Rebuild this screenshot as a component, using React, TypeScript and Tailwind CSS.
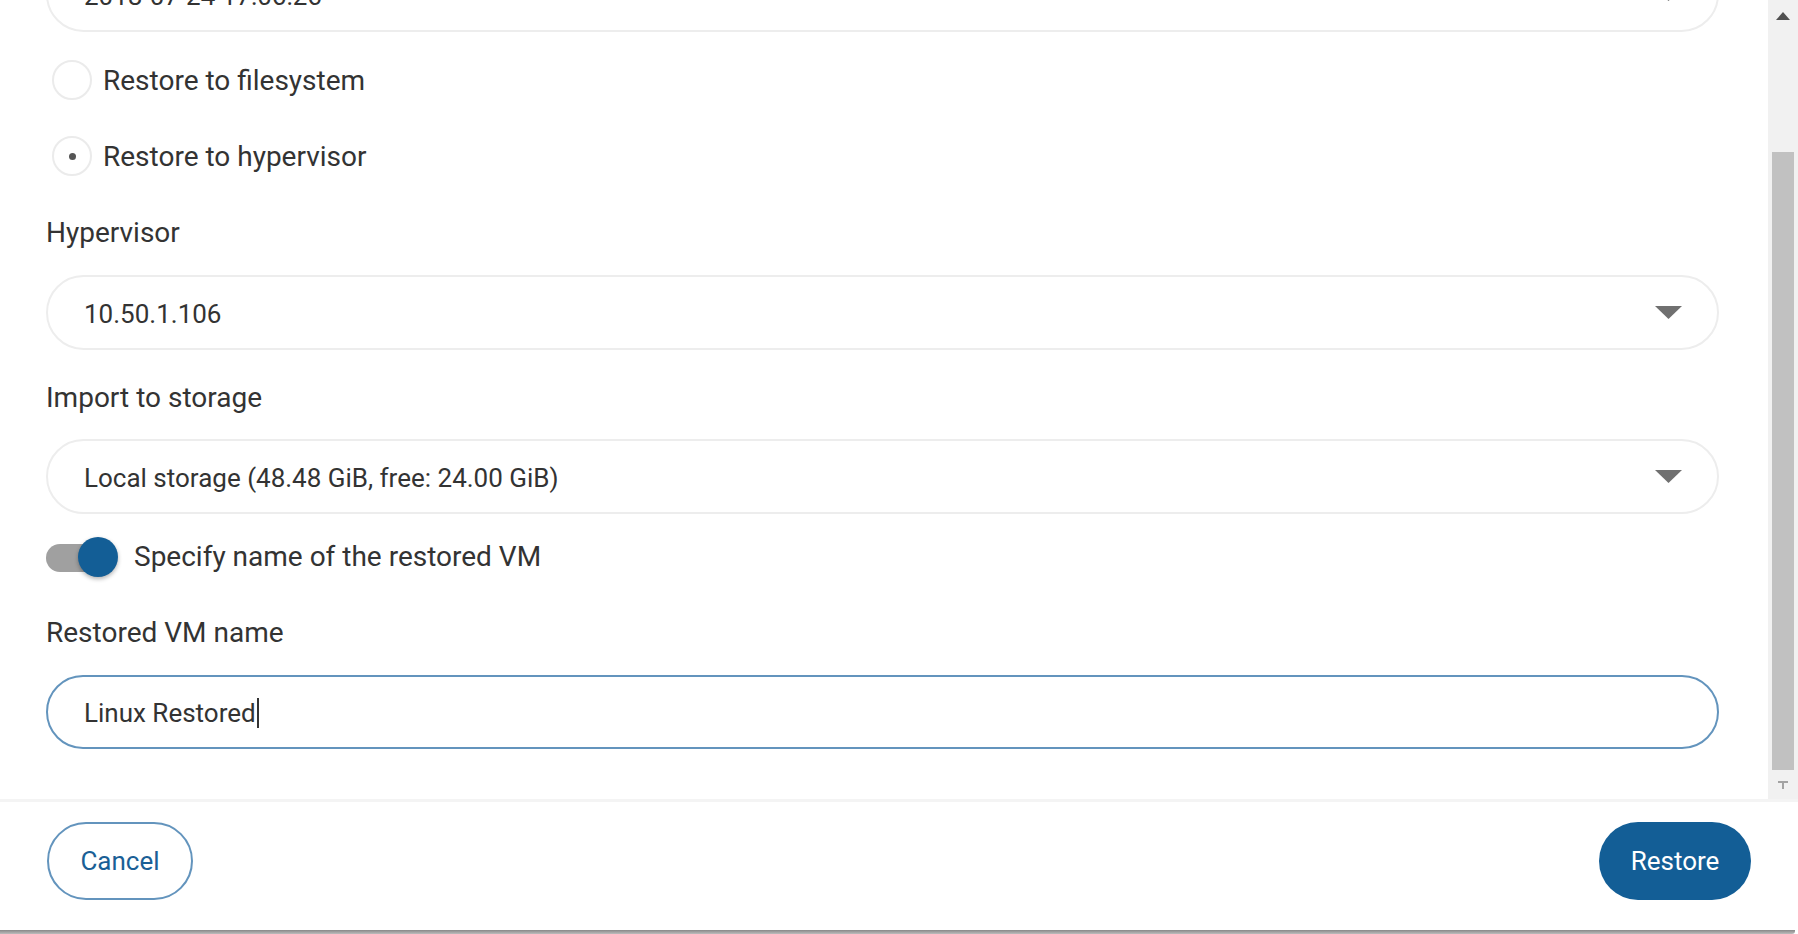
import React from "react";

const font = "font-['Roboto','Liberation_Sans',sans-serif]";

function Caret() {
  return (
    <svg width="27" height="13" viewBox="0 0 27 13" className="shrink-0">
      <path d="M0 0 H27 L13.5 13 Z" fill="#707070" />
    </svg>
  );
}

function Select({ value, className = "" }: { value: string; className?: string }) {
  return (
    <div className={`flex h-[75px] items-center justify-between rounded-full border-2 border-[#ededed] bg-white pl-[36px] pr-[35px] ${className}`}>
      <span className="translate-y-[2px] text-[26px] text-[#333]">{value}</span>
      <Caret />
    </div>
  );
}

function Radio({ label, checked, className = "" }: { label: string; checked?: boolean; className?: string }) {
  return (
    <label className={`flex h-[40px] items-center gap-[11px] pl-[6px] ${className}`}>
      <span className="flex h-[40px] w-[40px] items-center justify-center rounded-full border-2 border-[#ebebeb]">
        {checked && <span className="h-[7px] w-[7px] rounded-full bg-[#555]" />}
      </span>
      <span className="translate-y-[1px] text-[28px] text-[#333]">{label}</span>
    </label>
  );
}

function Label({ children, className = "" }: { children: React.ReactNode; className?: string }) {
  return <div className={`text-[28px] leading-[33px] text-[#333] ${className}`}>{children}</div>;
}

function Scrollbar() {
  return (
    <div className="flex w-[30px] shrink-0 flex-col bg-[#f1f1f1]">
      <div className="flex h-[32px] items-center justify-center">
        <svg width="14" height="8" viewBox="0 0 14 8">
          <path d="M7 0 L14 8 H0 Z" fill="#505050" />
        </svg>
      </div>
      <div className="h-[120px]" />
      <div className="mx-[4px] h-[618px] bg-[#c1c1c1]" />
      <div className="flex flex-1 items-center justify-center">
        <svg width="10" height="8" viewBox="0 0 10 8">
          <path d="M0 0 H10 V2 H6 V8 H4 V2 H0 Z" fill="#a3a3a3" />
        </svg>
      </div>
    </div>
  );
}

export default function App() {
  return (
    <div className={`flex h-[934px] w-full flex-col overflow-hidden bg-white ${font}`}>
      <div className="flex h-[799px] shrink-0">
        <div className="flex flex-1 flex-col overflow-hidden pl-[46px] pr-[49px]">
          <Select value="2018-07-24 17:06:26" className="mt-[-43px] shrink-0" />
          <Radio label="Restore to filesystem" className="mt-[28px]" />
          <Radio label="Restore to hypervisor" checked className="mt-[36px]" />
          <Label className="mt-[40px]">Hypervisor</Label>
          <Select value="10.50.1.106" className="mt-[26px] shrink-0" />
          <Label className="mt-[31px]">Import to storage</Label>
          <Select value="Local storage (48.48 GiB, free: 24.00 GiB)" className="mt-[25px] shrink-0" />
          <div className="mt-[23px] flex h-[40px] items-center gap-[16px]">
            <div className="relative h-[40px] w-[72px] shrink-0">
              <div className="absolute left-0 top-[7px] h-[28px] w-[64px] rounded-full bg-[#a0a0a0]" />
              <div className="absolute left-[32px] top-0 h-[40px] w-[40px] rounded-full bg-[#135e96] shadow-[0_2px_4px_rgba(0,0,0,0.3)]" />
            </div>
            <span className="text-[28px] text-[#333]">Specify name of the restored VM</span>
          </div>
          <Label className="mt-[39px]">Restored VM name</Label>
          <div className="mt-[26px] flex h-[74px] shrink-0 items-center rounded-full border-2 border-[#6394bd] pl-[36px]">
            <span className="translate-y-[1px] text-[26px] text-[#333]">Linux Restored</span>
            <span className="ml-[1px] h-[30px] w-[2px] translate-y-[1px] bg-[#333]" />
          </div>
        </div>
        <Scrollbar />
      </div>
      <div className="flex shrink-0 items-start justify-between border-t-[3px] border-[#f4f4f4] px-[47px] pb-[30px] pt-[20px]">
        <button className="h-[78px] w-[146px] rounded-full border-2 border-[#6394bd] text-[26px] text-[#1a5f96]">
          Cancel
        </button>
        <button className="h-[78px] w-[152px] rounded-full bg-[#135e96] text-[26px] text-white">
          Restore
        </button>
      </div>
      <div className="mr-[3px] h-[4px] shrink-0 rounded-br-[3px] bg-gradient-to-b from-[#888] to-[#bdbdbd]" />
    </div>
  );
}
